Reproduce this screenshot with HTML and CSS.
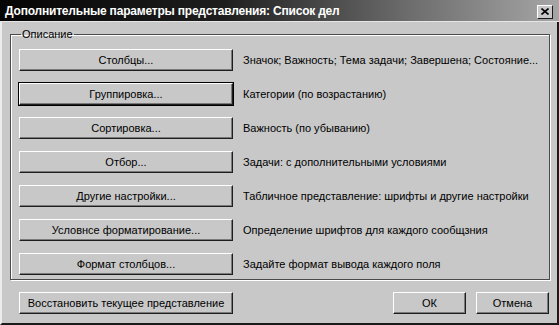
FILE: index.html
```html
<!DOCTYPE html>
<html lang="ru">
<head>
    <meta charset="UTF-8">
    <title>Дополнительные параметры представления</title>
    <link rel="stylesheet" href="styles.css">
</head>
<body>
    <div class="window">
        <div class="titlebar">
            <span class="title">Дополнительные параметры представления: Список дел</span>
            <button class="close-button" title="Закрыть">
                <svg width="8" height="7" viewBox="0 0 8 7">
                    <path d="M0.5 0.5 L7.5 6.5 M7.5 0.5 L0.5 6.5" stroke="#000" stroke-width="1.6" fill="none"/>
                </svg>
            </button>
        </div>
        <div class="content">
            <fieldset class="group">
                <legend>Описание</legend>
                <div class="rows">
                    <button class="btn wide">Столбцы...</button>
                    <span class="desc">Значок; Важность; Тема задачи; Завершена; Состояние...</span>

                    <button class="btn wide default">Группировка...</button>
                    <span class="desc">Категории (по возрастанию)</span>

                    <button class="btn wide">Сортировка...</button>
                    <span class="desc">Важность (по убыванию)</span>

                    <button class="btn wide">Отбор...</button>
                    <span class="desc">Задачи: с дополнительными условиями</span>

                    <button class="btn wide">Другие настройки...</button>
                    <span class="desc">Табличное представление: шрифты и другие настройки</span>

                    <button class="btn wide">Условнсе форматирование...</button>
                    <span class="desc">Определение шрифтов для каждого сообщзния</span>

                    <button class="btn wide">Формат столбцов...</button>
                    <span class="desc">Задайте формат вывода каждого поля</span>
                </div>
            </fieldset>
            <div class="footer">
                <button class="btn wide">Восстановить текущее представление</button>
                <div class="footer-right">
                    <button class="btn small">ОК</button>
                    <button class="btn small">Отмена</button>
                </div>
            </div>
        </div>
    </div>
</body>
</html>
```

FILE: styles.css
```css
body {
    margin: 0;
    background-color: #c8c8c8;
    font-family: "Liberation Sans", Arial, sans-serif;
    font-size: 11px;
    color: #000;
}
.window {
    width: 559px;
    height: 325px;
    box-sizing: border-box;
    background-color: #c8c8c8;
    border-left: 2px solid #ececec;
    border-right: 2px solid #1a1a1a;
    border-bottom: 2px solid #1a1a1a;
    display: flex;
    flex-direction: column;
}
.titlebar {
    height: 21px;
    margin-left: -2px;
    margin-right: -2px;
    padding: 0 6px 0 5px;
    display: flex;
    align-items: center;
    justify-content: space-between;
    background: linear-gradient(to right, #050505 0%, #1e1e1e 40%, #6a6a6a 72%, #a6a6a6 100%);
    border-bottom: 1px solid #e6e6e6;
}
.title {
    color: #ffffff;
    font-weight: bold;
    font-size: 12px;
    letter-spacing: -0.2px;
    white-space: nowrap;
}
.close-button {
    width: 16px;
    height: 14px;
    padding: 0;
    margin-top: 2px;
    background-color: #c8c8c8;
    border: 1px solid;
    border-color: #ffffff #1a1a1a #1a1a1a #ffffff;
    display: flex;
    align-items: center;
    justify-content: center;
}
.content {
    flex: 1;
    padding: 6px 7px 0 8px;
    display: flex;
    flex-direction: column;
}
/* Group box */
.group {
    margin: 0;
    padding: 8px 8px 4px 8px;
    border: 1px solid #4a4a4a;
    box-shadow: 1px 1px 0 #ffffff, inset 1px 1px 0 #ffffff;
}
.group legend {
    padding: 0 1px;
    margin-left: 2px;
    line-height: 13px;
}
.rows {
    display: grid;
    grid-template-columns: 214px 1fr;
    column-gap: 10px;
    row-gap: 12px;
    align-items: center;
}
.desc {
    white-space: nowrap;
}
/* Buttons */
.btn {
    height: 22px;
    padding: 0;
    box-sizing: border-box;
    font-family: inherit;
    font-size: 11px;
    color: #000;
    background-color: #c8c8c8;
    border: 1px solid;
    border-color: #ffffff #1e1e1e #1e1e1e #ffffff;
    box-shadow: inset -1px -1px 0 #7a7a7a;
    white-space: nowrap;
}
.btn.wide {
    width: 214px;
}
.btn.small {
    width: 73px;
}
.btn.default {
    box-shadow: inset -1px -1px 0 #7a7a7a, 0 0 0 1px #000;
}
.footer {
    margin-top: 12px;
    padding: 0 1px 0 9px;
    display: flex;
    justify-content: space-between;
}
.footer-right {
    display: flex;
    gap: 10px;
}
```
